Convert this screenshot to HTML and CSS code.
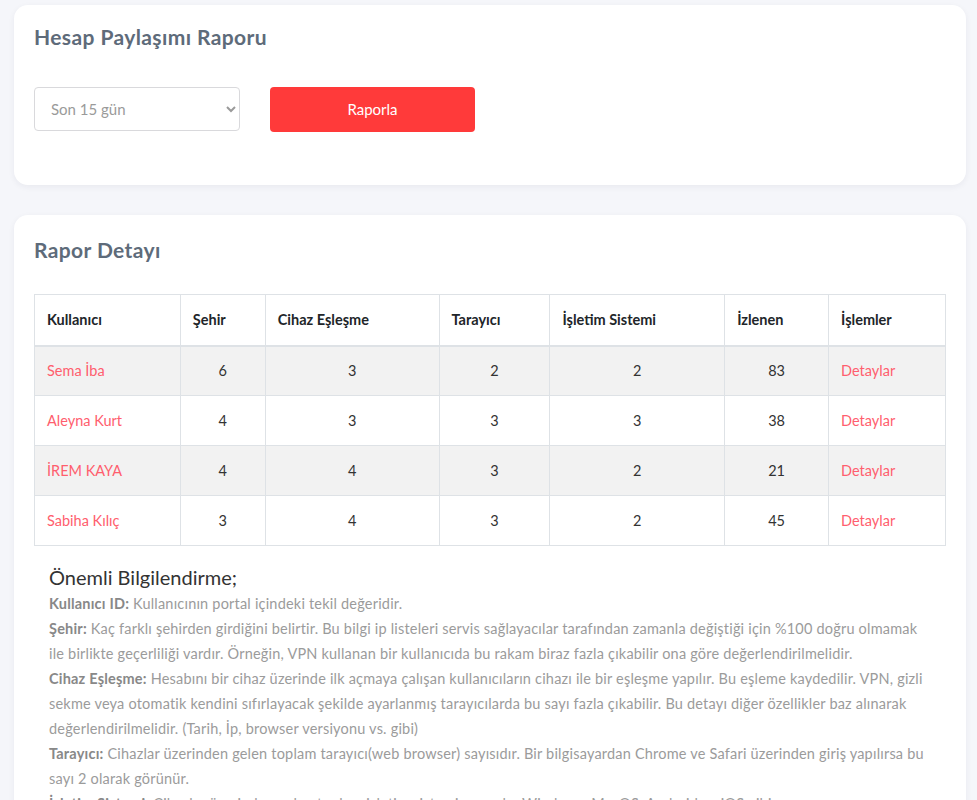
FILE: index.html
```html
<!DOCTYPE html>
<html lang="tr">
<head>
<meta charset="utf-8">
<title>Hesap Paylaşımı Raporu</title>
<link rel="stylesheet" href="styles.css">
</head>
<body>
<div class="page">
  <section class="card">
    <h2 class="card-title">Hesap Paylaşımı Raporu</h2>
    <div class="filter-row">
      <select class="period">
        <option>Son 15 gün</option>
        <option>Son 30 gün</option>
      </select>
      <button class="btn-report">Raporla</button>
    </div>
  </section>

  <section class="card card-detail">
    <h2 class="card-title">Rapor Detayı</h2>
    <table class="report">
      <colgroup>
        <col class="c1"><col class="c2"><col class="c3"><col class="c4"><col class="c5"><col class="c6"><col class="c7">
      </colgroup>
      <thead>
        <tr>
          <th>Kullanıcı</th>
          <th>Şehir</th>
          <th>Cihaz Eşleşme</th>
          <th>Tarayıcı</th>
          <th>İşletim Sistemi</th>
          <th>İzlenen</th>
          <th>İşlemler</th>
        </tr>
      </thead>
      <tbody>
        <tr>
          <td><a href="#" class="link">Sema İba</a></td>
          <td class="num">6</td><td class="num">3</td><td class="num">2</td><td class="num">2</td><td class="num">83</td>
          <td><a href="#" class="link">Detaylar</a></td>
        </tr>
        <tr>
          <td><a href="#" class="link">Aleyna Kurt</a></td>
          <td class="num">4</td><td class="num">3</td><td class="num">3</td><td class="num">3</td><td class="num">38</td>
          <td><a href="#" class="link">Detaylar</a></td>
        </tr>
        <tr>
          <td><a href="#" class="link">İREM KAYA</a></td>
          <td class="num">4</td><td class="num">4</td><td class="num">3</td><td class="num">2</td><td class="num">21</td>
          <td><a href="#" class="link">Detaylar</a></td>
        </tr>
        <tr>
          <td><a href="#" class="link">Sabiha Kılıç</a></td>
          <td class="num">3</td><td class="num">4</td><td class="num">3</td><td class="num">2</td><td class="num">45</td>
          <td><a href="#" class="link">Detaylar</a></td>
        </tr>
      </tbody>
    </table>

    <div class="notes">
      <h3 class="notes-title">Önemli Bilgilendirme;</h3>
      <p><b>Kullanıcı ID:</b> Kullanıcının portal içindeki tekil değeridir.</p>
      <p><b>Şehir:</b> Kaç farklı şehirden girdiğini belirtir. Bu bilgi ip listeleri servis sağlayacılar tarafından zamanla değiştiği için %100 doğru olmamak ile birlikte geçerliliği vardır. Örneğin, VPN kullanan bir kullanıcıda bu rakam biraz fazla çıkabilir ona göre değerlendirilmelidir.</p>
      <p><b>Cihaz Eşleşme:</b> Hesabını bir cihaz üzerinde ilk açmaya çalışan kullanıcıların cihazı ile bir eşleşme yapılır. Bu eşleme kaydedilir. VPN, gizli sekme veya otomatik kendini sıfırlayacak şekilde ayarlanmış tarayıcılarda bu sayı fazla çıkabilir. Bu detayı diğer özellikler baz alınarak değerlendirilmelidir. (Tarih, İp, browser versiyonu vs. gibi)</p>
      <p><b>Tarayıcı:</b> Cihazlar üzerinden gelen toplam tarayıcı(web browser) sayısıdır. Bir bilgisayardan Chrome ve Safari üzerinden giriş yapılırsa bu sayı 2 olarak görünür.</p>
      <p><b>İşletim Sistemi:</b> Cihazlar üzerinden gelen toplam işletim sistemi sayısıdır. Windows, MacOS, Android ve iOS gibi.</p>
      <p><b>İzlenen:</b> Seçilen tarih aralığında izlenen toplam içerik sayısıdır.</p>
    </div>
  </section>
</div>
</body>
</html>
```

FILE: styles.css
```css
* { box-sizing: border-box; }

html, body {
  margin: 0;
  padding: 0;
  background: #f5f6fa;
}

body {
  font-family: "Lato", "Noto Sans", sans-serif;
  color: #212529;
}

.page {
  padding: 5px 11px 40px 14px;
}

.card {
  background: #ffffff;
  border-radius: 14px;
  box-shadow: 0 2px 6px rgba(30, 40, 60, 0.06);
  padding: 20px 20px;
  margin-bottom: 30px;
}

.card-title {
  margin: 0;
  font-size: 21px;
  line-height: 24px;
  font-weight: 700;
  letter-spacing: 0.4px;
  color: #5e6b7a;
}

.filter-row {
  display: flex;
  gap: 30px;
  margin-top: 38px;
  margin-bottom: 33px;
}

.period {
  width: 206px;
  height: 44px;
  border: 1px solid #d9d9dc;
  border-radius: 4px;
  background: #fff;
  color: #9a9a9a;
  font-family: inherit;
  font-size: 15px;
  padding: 0 10px 0 12px;
}

.btn-report {
  width: 205px;
  height: 45px;
  border: 0;
  border-radius: 4px;
  background: #ff3a3a;
  color: #ffffff;
  font-family: inherit;
  font-size: 15px;
  padding: 0 0 2px;
}

.card-detail .card-title {
  margin-top: 3px;
}

.report {
  width: 100%;
  margin-top: 32px;
  border-collapse: collapse;
  font-size: 14.5px;
}

.c1 { width: 146px; }
.c2 { width: 85px; }
.c3 { width: 174px; }
.c4 { width: 111px; }
.c5 { width: 175px; }
.c6 { width: 104px; }
.c7 { width: 117px; }

.report th,
.report td {
  border: 1px solid #dee2e6;
  padding: 0 12px;
  height: 50px;
  text-align: left;
}

.report th {
  font-weight: 700;
  color: #212529;
  border-bottom: 2px solid #dee2e6;
  height: 51px;
}

.report td {
  color: #333;
}

.report td.num {
  text-align: center;
}

.report tbody tr:nth-child(odd) {
  background: #f2f2f2;
}

.link {
  color: #ff5e6e;
  text-decoration: none;
}

.notes {
  padding: 18px 15px 0;
}

.notes-title {
  margin: 0;
  font-size: 20px;
  line-height: 27px;
  font-weight: 400;
  color: #333;
}

.notes p {
  margin: 0;
  font-size: 14.5px;
  line-height: 25px;
  letter-spacing: 0.2px;
  color: #9b9b9b;
}

.notes b {
  color: #888888;
  font-weight: 700;
}
```
